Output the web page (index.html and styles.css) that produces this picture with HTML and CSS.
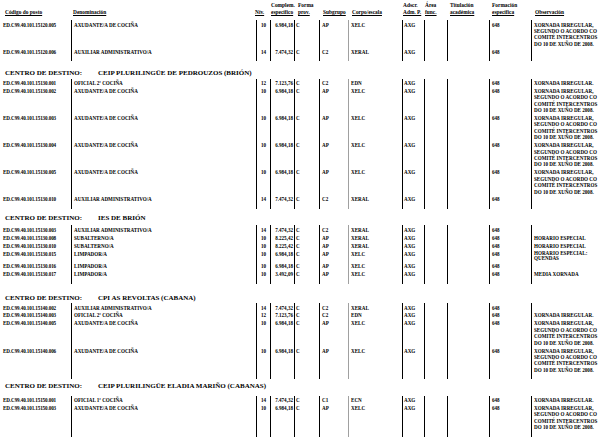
FILE: index.html
```html
<!DOCTYPE html>
<html lang="gl">
<head>
<meta charset="utf-8">
<title>Relación de postos</title>
<link rel="stylesheet" href="styles.css">
</head>
<body>
<div class="page">
  <div class="grid head">
    <div class="c1"><span class="u">Código do posto</span></div>
    <div class="c2"><span class="u">Denominación</span></div>
    <div class="c3"><span class="u">Nív.</span></div>
    <div class="c4">Complem.<br><span class="u">específico</span></div>
    <div class="c5">Forma<br><span class="u">prov.</span></div>
    <div class="c6"><span class="u">Subgrupo</span></div>
    <div class="c7"><span class="u">Corpo/escala</span></div>
    <div class="c8">Adscr.<br><span class="u">Adm. P.</span></div>
    <div class="c9">Área<br><span class="u">func.</span></div>
    <div class="c10">Titulación<br><span class="u">académica</span></div>
    <div class="c11">Formación<br><span class="u">específica</span></div>
    <div class="c12"><span class="u">Observación</span></div>
  </div>

  <div class="block first">
    <div class="grid row">
      <div class="c1">ED.C99.40.101.15120.005</div><div class="c2">AXUDANTE/A DE COCIÑA</div><div class="c3">10</div><div class="c4">6.984,18</div><div class="c5">C</div><div class="c6">AP</div><div class="c7">XELC</div><div class="c8">AXG</div><div class="c9"></div><div class="c10"></div><div class="c11">648</div><div class="c12">XORNADA IRREGULAR,<br>SEGUNDO O ACORDO CO<br>COMITÉ INTERCENTROS<br>DO 10 DE XUÑO DE 2008.</div>
    </div>
    <div class="grid row">
      <div class="c1">ED.C99.40.101.15120.006</div><div class="c2">AUXILIAR ADMINISTRATIVO/A</div><div class="c3">14</div><div class="c4">7.474,32</div><div class="c5">C</div><div class="c6">C2</div><div class="c7">XERAL</div><div class="c8">AXG</div><div class="c9"></div><div class="c10"></div><div class="c11">648</div><div class="c12"></div>
    </div>
  </div>

  <div class="centro s2"><span>CENTRO DE DESTINO:</span><span>CEIP PLURILINGÜE DE PEDROUZOS (BRIÓN)</span></div>
  <div class="block">
    <div class="grid row">
      <div class="c1">ED.C99.40.101.15130.001</div><div class="c2">OFICIAL 2ª COCIÑA</div><div class="c3">12</div><div class="c4">7.123,76</div><div class="c5">C</div><div class="c6">C2</div><div class="c7">EDN</div><div class="c8">AXG</div><div class="c9"></div><div class="c10"></div><div class="c11">648</div><div class="c12">XORNADA IRREGULAR.</div>
    </div>
    <div class="grid row">
      <div class="c1">ED.C99.40.101.15130.002</div><div class="c2">AXUDANTE/A DE COCIÑA</div><div class="c3">10</div><div class="c4">6.984,18</div><div class="c5">C</div><div class="c6">AP</div><div class="c7">XELC</div><div class="c8">AXG</div><div class="c9"></div><div class="c10"></div><div class="c11">648</div><div class="c12">XORNADA IRREGULAR,<br>SEGUNDO O ACORDO CO<br>COMITÉ INTERCENTROS<br>DO 10 DE XUÑO DE 2008.</div>
    </div>
    <div class="grid row">
      <div class="c1">ED.C99.40.101.15130.003</div><div class="c2">AXUDANTE/A DE COCIÑA</div><div class="c3">10</div><div class="c4">6.984,18</div><div class="c5">C</div><div class="c6">AP</div><div class="c7">XELC</div><div class="c8">AXG</div><div class="c9"></div><div class="c10"></div><div class="c11">648</div><div class="c12">XORNADA IRREGULAR,<br>SEGUNDO O ACORDO CO<br>COMITÉ INTERCENTROS<br>DO 10 DE XUÑO DE 2008.</div>
    </div>
    <div class="grid row">
      <div class="c1">ED.C99.40.101.15130.004</div><div class="c2">AXUDANTE/A DE COCIÑA</div><div class="c3">10</div><div class="c4">6.984,18</div><div class="c5">C</div><div class="c6">AP</div><div class="c7">XELC</div><div class="c8">AXG</div><div class="c9"></div><div class="c10"></div><div class="c11">648</div><div class="c12">XORNADA IRREGULAR,<br>SEGUNDO O ACORDO CO<br>COMITÉ INTERCENTROS<br>DO 10 DE XUÑO DE 2008.</div>
    </div>
    <div class="grid row">
      <div class="c1">ED.C99.40.101.15130.005</div><div class="c2">AXUDANTE/A DE COCIÑA</div><div class="c3">10</div><div class="c4">6.984,18</div><div class="c5">C</div><div class="c6">AP</div><div class="c7">XELC</div><div class="c8">AXG</div><div class="c9"></div><div class="c10"></div><div class="c11">648</div><div class="c12">XORNADA IRREGULAR,<br>SEGUNDO O ACORDO CO<br>COMITÉ INTERCENTROS<br>DO 10 DE XUÑO DE 2008.</div>
    </div>
    <div class="grid row">
      <div class="c1">ED.C99.40.101.15130.010</div><div class="c2">AUXILIAR ADMINISTRATIVO/A</div><div class="c3">14</div><div class="c4">7.474,32</div><div class="c5">C</div><div class="c6">C2</div><div class="c7">XERAL</div><div class="c8">AXG</div><div class="c9"></div><div class="c10"></div><div class="c11">648</div><div class="c12"></div>
    </div>
  </div>

  <div class="centro s3"><span>CENTRO DE DESTINO:</span><span>IES DE BRIÓN</span></div>
  <div class="block">
    <div class="grid row">
      <div class="c1">ED.C99.40.101.15130.003</div><div class="c2">AUXILIAR ADMINISTRATIVO/A</div><div class="c3">14</div><div class="c4">7.474,32</div><div class="c5">C</div><div class="c6">C2</div><div class="c7">XERAL</div><div class="c8">AXG</div><div class="c9"></div><div class="c10"></div><div class="c11">648</div><div class="c12"></div>
    </div>
    <div class="grid row">
      <div class="c1">ED.C99.40.101.15130.008</div><div class="c2">SUBALTERNO/A</div><div class="c3">10</div><div class="c4">8.225,42</div><div class="c5">C</div><div class="c6">AP</div><div class="c7">XERAL</div><div class="c8">AXG</div><div class="c9"></div><div class="c10"></div><div class="c11">648</div><div class="c12">HORARIO ESPECIAL</div>
    </div>
    <div class="grid row">
      <div class="c1">ED.C99.40.101.15130.010</div><div class="c2">SUBALTERNO/A</div><div class="c3">10</div><div class="c4">8.225,42</div><div class="c5">C</div><div class="c6">AP</div><div class="c7">XERAL</div><div class="c8">AXG</div><div class="c9"></div><div class="c10"></div><div class="c11">648</div><div class="c12">HORARIO ESPECIAL</div>
    </div>
    <div class="grid row two">
      <div class="c1">ED.C99.40.101.15130.015</div><div class="c2">LIMPADOR/A</div><div class="c3">10</div><div class="c4">6.984,18</div><div class="c5">C</div><div class="c6">AP</div><div class="c7">XELC</div><div class="c8">AXG</div><div class="c9"></div><div class="c10"></div><div class="c11">648</div><div class="c12">HORARIO ESPECIAL:<br>QUENDAS</div>
    </div>
    <div class="grid row">
      <div class="c1">ED.C99.40.101.15130.016</div><div class="c2">LIMPADOR/A</div><div class="c3">10</div><div class="c4">6.984,18</div><div class="c5">C</div><div class="c6">AP</div><div class="c7">XELC</div><div class="c8">AXG</div><div class="c9"></div><div class="c10"></div><div class="c11">648</div><div class="c12"></div>
    </div>
    <div class="grid row">
      <div class="c1">ED.C99.40.101.15130.017</div><div class="c2">LIMPADOR/A</div><div class="c3">10</div><div class="c4">3.492,09</div><div class="c5">C</div><div class="c6">AP</div><div class="c7">XELC</div><div class="c8">AXG</div><div class="c9"></div><div class="c10"></div><div class="c11">648</div><div class="c12">MEDIA XORNADA</div>
    </div>
  </div>

  <div class="centro s4"><span>CENTRO DE DESTINO:</span><span>CPI AS REVOLTAS (CABANA)</span></div>
  <div class="block">
    <div class="grid row">
      <div class="c1">ED.C99.40.101.15140.002</div><div class="c2">AUXILIAR ADMINISTRATIVO/A</div><div class="c3">14</div><div class="c4">7.474,32</div><div class="c5">C</div><div class="c6">C2</div><div class="c7">XERAL</div><div class="c8">AXG</div><div class="c9"></div><div class="c10"></div><div class="c11">648</div><div class="c12"></div>
    </div>
    <div class="grid row">
      <div class="c1">ED.C99.40.101.15140.003</div><div class="c2">OFICIAL 2ª COCIÑA</div><div class="c3">12</div><div class="c4">7.123,76</div><div class="c5">C</div><div class="c6">C2</div><div class="c7">EDN</div><div class="c8">AXG</div><div class="c9"></div><div class="c10"></div><div class="c11">648</div><div class="c12">XORNADA IRREGULAR.</div>
    </div>
    <div class="grid row">
      <div class="c1">ED.C99.40.101.15140.005</div><div class="c2">AXUDANTE/A DE COCIÑA</div><div class="c3">10</div><div class="c4">6.984,18</div><div class="c5">C</div><div class="c6">AP</div><div class="c7">XELC</div><div class="c8">AXG</div><div class="c9"></div><div class="c10"></div><div class="c11">648</div><div class="c12">XORNADA IRREGULAR,<br>SEGUNDO O ACORDO CO<br>COMITÉ INTERCENTROS<br>DO 10 DE XUÑO DE 2008.</div>
    </div>
    <div class="grid row">
      <div class="c1">ED.C99.40.101.15140.006</div><div class="c2">AXUDANTE/A DE COCIÑA</div><div class="c3">10</div><div class="c4">6.984,18</div><div class="c5">C</div><div class="c6">AP</div><div class="c7">XELC</div><div class="c8">AXG</div><div class="c9"></div><div class="c10"></div><div class="c11">648</div><div class="c12">XORNADA IRREGULAR,<br>SEGUNDO O ACORDO CO<br>COMITÉ INTERCENTROS<br>DO 10 DE XUÑO DE 2008.</div>
    </div>
  </div>

  <div class="centro s5"><span>CENTRO DE DESTINO:</span><span>CEIP PLURILINGÜE ELADIA MARIÑO (CABANAS)</span></div>
  <div class="block">
    <div class="grid row">
      <div class="c1">ED.C99.40.101.15150.001</div><div class="c2">OFICIAL 1ª COCIÑA</div><div class="c3">14</div><div class="c4">7.474,32</div><div class="c5">C</div><div class="c6">C1</div><div class="c7">ECN</div><div class="c8">AXG</div><div class="c9"></div><div class="c10"></div><div class="c11">648</div><div class="c12">XORNADA IRREGULAR.</div>
    </div>
    <div class="grid row">
      <div class="c1">ED.C99.40.101.15150.003</div><div class="c2">AXUDANTE/A DE COCIÑA</div><div class="c3">10</div><div class="c4">6.984,18</div><div class="c5">C</div><div class="c6">AP</div><div class="c7">XELC</div><div class="c8">AXG</div><div class="c9"></div><div class="c10"></div><div class="c11">648</div><div class="c12">XORNADA IRREGULAR,<br>SEGUNDO O ACORDO CO<br>COMITÉ INTERCENTROS<br>DO 10 DE XUÑO DE 2008.</div>
    </div>
  </div>
</div>
</body>
</html>
```

FILE: styles.css
```css
html, body {
  margin: 0;
  padding: 0;
  background: #ffffff;
}

body {
  font-family: "Liberation Serif", "Times New Roman", serif;
  color: #000000;
}

.page {
  width: 616px;
  height: 439px;
  overflow: hidden;
  font-weight: bold;
}

.grid {
  display: grid;
  grid-template-columns: 71px 185px 14px 24px 25px 29px 54px 22px 23px 42px 42px 85px;
}

.head {
  align-items: end;
  padding-top: 1px;
  font-size: 5.4px;
  line-height: 7px;
  height: 15px;
}

.head .c1 { padding-left: 5px; }
.head .c2 { padding-left: 2px; }
.head .c3 { margin-left: -1px; }
.head .c4 { padding-left: 1px; }
.head .c5 { padding-left: 4px; }
.head .c6 { padding-left: 4px; }
.head .c7 { padding-left: 4px; }
.head .c8 { padding-left: 1px; }
.head .c9 { padding-left: 1px; }
.head .c10 { padding-left: 3px; }
.head .c11 { padding-left: 3px; }
.head .c12 { padding-left: 4px; }

.u {
  text-decoration: underline;
  text-decoration-thickness: 1px;
  text-underline-offset: 1px;
}

.block {
  font-size: 5.1px;
  line-height: 6.4px;
}

.block.first {
  margin-top: 4px;
}

.row > div {
  padding-top: 1.5px;
  white-space: nowrap;
}

.row > div + div {
  border-left: 1px solid #000000;
}

.row > .c7 {
  border-left-color: #a0a0a0;
}

.row:last-child > div {
  padding-bottom: 6px;
}

.row > .c1 {
  letter-spacing: -0.1px;
}

.row.two > .c12 {
  line-height: 5.6px;
}

.row .c1 { padding-left: 3px; }
.row .c2 { padding-left: 2px; }
.row .c3 { text-align: center; }
.row .c4 { text-align: right; padding-right: 1px; }
.row .c5 { padding-left: 1px; }
.row .c6 { padding-left: 2px; }
.row .c7 { padding-left: 2px; }
.row .c8 { padding-left: 1px; }
.row .c11 { padding-left: 2px; }
.row .c12 { padding-left: 2px; }

.centro {
  display: flex;
  gap: 16px;
  padding: 8px 0 1.5px 5px;
  font-size: 7px;
  line-height: 8px;
}

.centro.s3 { padding-top: 5px; padding-bottom: 3.5px; }
.centro.s4 { padding-top: 10px; }
.centro.s5 { padding-top: 3px; padding-bottom: 5.5px; }
```
